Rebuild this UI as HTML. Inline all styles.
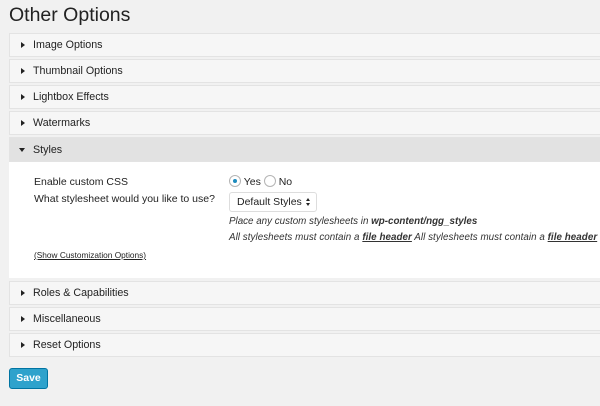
<!DOCTYPE html>
<html><head><style>
body{margin:0;width:600px;height:406px;background:#f1f1f1;font-family:"Liberation Sans",sans-serif;color:#222;position:relative;overflow:hidden}
h1{position:absolute;left:9px;top:4px;margin:0;font-size:19.5px;font-weight:normal;color:#222}
.hd{position:absolute;left:9px;width:600px;height:24px;background:#f6f6f6;border:1px solid #e3e3e3;box-sizing:border-box;font-size:10.7px;line-height:22px;padding-left:23px}
.hd:before{content:"";position:absolute;left:11px;top:8px;border-left:4px solid #222;border-top:3.5px solid transparent;border-bottom:3.5px solid transparent}
.hd.open{background:#e2e2e2;height:25px;line-height:24px}
.hd.open:before{left:9px;top:10px;border-top:4px solid #222;border-left:3.5px solid transparent;border-right:3.5px solid transparent;border-bottom:0}
.body{position:absolute;left:9px;top:162px;width:600px;height:116px;background:#fff}
.t{position:absolute;font-size:10.5px;white-space:nowrap}
.i{font-style:italic;font-size:9.8px;color:#333}
u{font-weight:bold}
.r{display:inline-block;width:12px;height:12px;border:1px solid #b4b4b4;border-radius:50%;box-sizing:border-box;vertical-align:-2px;position:relative;background:#fff}
.r.on:after{content:"";position:absolute;left:3px;top:3px;width:4px;height:4px;border-radius:50%;background:#1e8cbe}
.sel{position:absolute;left:229px;top:192px;width:88px;height:20px;border:1px solid #ddd;border-radius:3px;box-sizing:border-box;background:#fff;font-size:10.5px;line-height:18px;padding-left:7px}
.sel .a{position:absolute;right:6px;top:5px;width:0;height:0;border-bottom:3px solid #222;border-left:2.5px solid transparent;border-right:2.5px solid transparent}
.sel .b{position:absolute;right:6px;top:10px;width:0;height:0;border-top:3px solid #222;border-left:2.5px solid transparent;border-right:2.5px solid transparent}
.btn{position:absolute;left:9px;top:368px;width:39px;height:21px;background:#2ea2cc;border:1px solid #0074a2;border-radius:3px;box-sizing:border-box;color:#fff;font-weight:bold;font-size:10.5px;line-height:19px;text-align:center}
</style></head><body>
<h1>Other Options</h1>
<div class="hd" style="top:33px">Image Options</div>
<div class="hd" style="top:59px">Thumbnail Options</div>
<div class="hd" style="top:85px">Lightbox Effects</div>
<div class="hd" style="top:111px">Watermarks</div>
<div class="hd open" style="top:137px">Styles</div>
<div class="body"></div>
<div class="t" style="left:34px;top:176px">Enable custom CSS</div>
<div class="t" style="left:229px;top:175px"><span class="r on"></span> Yes <span class="r"></span> No</div>
<div class="t" style="left:34px;top:193px">What stylesheet would you like to use?</div>
<div class="sel">Default Styles<span class="a"></span><span class="b"></span></div>
<div class="t i" style="left:229px;top:216px">Place any custom stylesheets in <b>wp-content/ngg_styles</b></div>
<div class="t i" style="left:229px;top:232px;letter-spacing:0.05px">All stylesheets must contain a <u>file header</u> All stylesheets must contain a <u>file header</u></div>
<div class="t" style="left:34px;top:250px;font-size:8.3px;text-decoration:underline">(Show Customization Options)</div>
<div class="hd" style="top:281px">Roles &amp; Capabilities</div>
<div class="hd" style="top:307px">Miscellaneous</div>
<div class="hd" style="top:333px">Reset Options</div>
<div class="btn">Save</div>
</body></html>
